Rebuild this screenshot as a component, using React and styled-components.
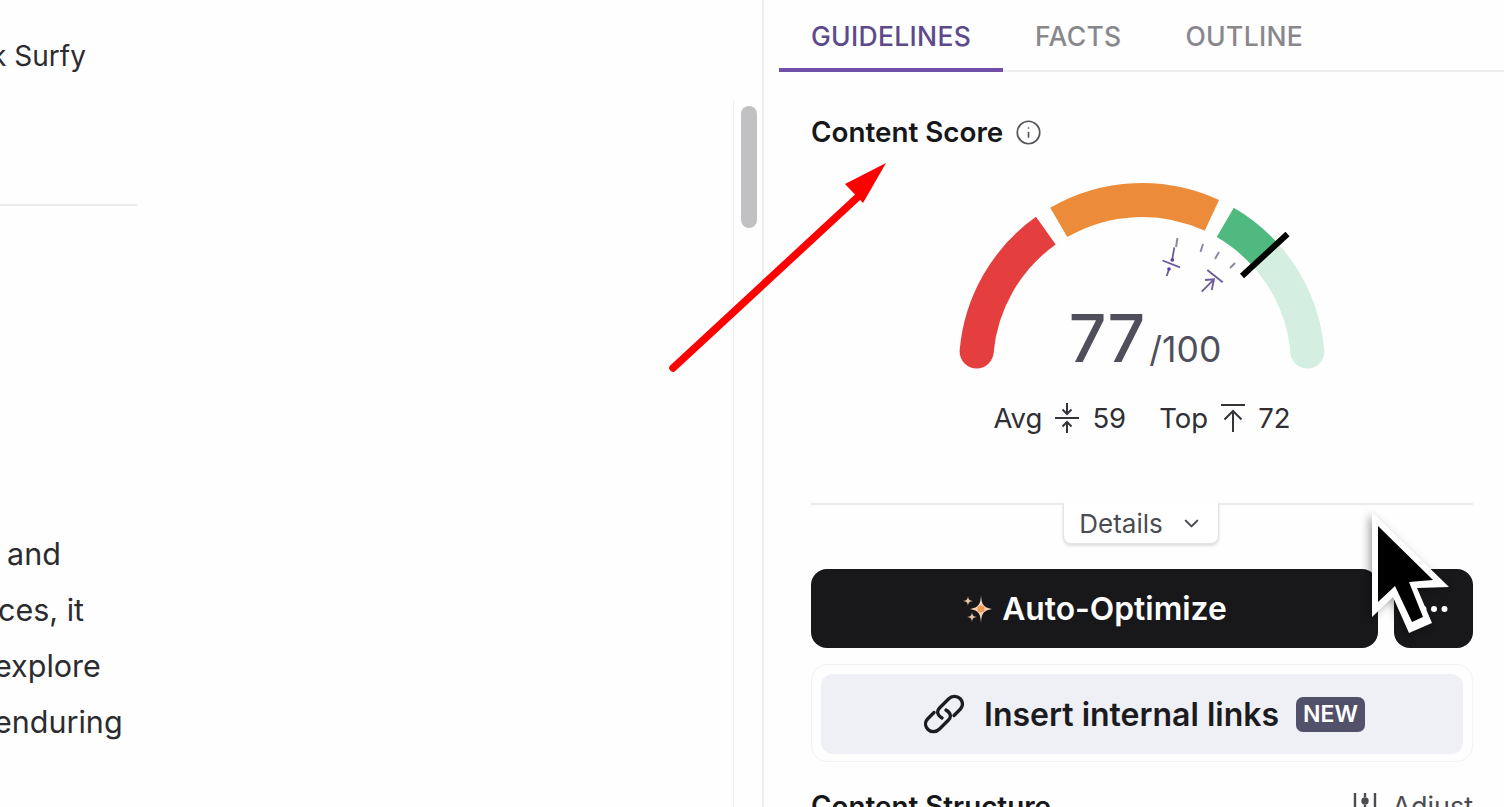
import React from "react";
import styled, { createGlobalStyle } from "styled-components";
import { ChevronDown, Ellipsis, Info } from "lucide-react";

const Global = createGlobalStyle`
  html, body {
    margin: 0;
    height: 100%;
    overflow: hidden;
    background: #fefefe;
    font-family: Inter, "Liberation Sans", sans-serif;
  }
  * { box-sizing: border-box; }
`;

const Page = styled.div`
  display: grid;
  grid-template-columns: 733px 31px 1fr;
  width: 1504px;
  height: 807px;
  overflow: hidden;
  position: relative;
`;

const Article = styled.div`
  overflow: hidden;
  padding-top: 36px;
  color: #2c2c30;
  font-size: 28px;
  line-height: 40px;
`;

const Line = styled.div`
  white-space: nowrap;
  margin-left: ${(p) => p.$left || 0}px;
`;

const Rule = styled.div`
  width: 137px;
  height: 2px;
  background: #ececee;
  margin: 128px 0 320px;
`;

const Para = styled.div`
  font-size: 30.5px;
  line-height: 56px;
`;

const Gutter = styled.div`
  padding-top: 100px;
  border-right: 2px solid #eeeef0;
  display: flex;
`;

const Track = styled.div`
  flex: 1;
  border-left: 1px solid #f0f0f2;
  padding: 6px 5px 0 7px;
`;

const Thumb = styled.div`
  height: 122px;
  background: #c1c1c3;
  border-radius: 8px;
`;

const Panel = styled.div`
  display: flex;
  flex-direction: column;
  padding-left: 15px;
  min-width: 0;
`;

const Tabs = styled.div`
  display: flex;
  height: 72px;
  border-bottom: 2px solid #eeeef1;
`;

const Tab = styled.div`
  padding: 0 32px;
  height: 72px;
  line-height: 72px;
  font-size: 26.5px;
  letter-spacing: 0.3px;
  font-weight: 500;
  color: ${(p) => (p.$active ? "#5c4a8c" : "#87878c")};
  border-bottom: ${(p) => (p.$active ? "4px solid #6f4fa8" : "none")};
`;

const Body = styled.div`
  padding: 0 31px 0 32px;
`;

const HeadRow = styled.div`
  display: flex;
  align-items: center;
  gap: 12px;
  margin-top: 42px;
  height: 36px;
`;

const Heading = styled.div`
  font-size: 27.8px;
  font-weight: 600;
  color: #17171a;
  white-space: nowrap;
`;

const GaugeWrap = styled.div`
  position: relative;
  height: 247px;
  margin-top: 26px;
`;

const GaugeSvg = styled.svg`
  display: block;
  width: 662px;
  height: 247px;
`;

const ScoreText = styled.div`
  position: absolute;
  left: 0;
  right: 0;
  top: 122px;
  display: flex;
  justify-content: center;
  align-items: baseline;
  gap: 4px;
  padding-left: 6px;
  color: #4f4f5c;
`;

const ScoreBig = styled.span`
  font-size: 66px;
  font-weight: 500;
  line-height: 80px;
`;

const ScoreOf = styled.span`
  font-size: 35.5px;
`;

const Stats = styled.div`
  position: absolute;
  left: 0;
  right: 0;
  top: 224px;
  display: flex;
  justify-content: center;
  align-items: center;
  gap: 33px;
  color: #2f2f35;
  font-size: 27.5px;
  line-height: 36px;
`;

const Stat = styled.div`
  display: flex;
  align-items: center;
  gap: 13px;
`;

const DividerRow = styled.div`
  margin-top: 80px;
  height: 2px;
  background: #ebebee;
  display: flex;
  justify-content: center;
`;

const DetailsBtn = styled.div`
  display: flex;
  align-items: center;
  justify-content: center;
  gap: 17px;
  width: 156px;
  height: 41px;
  background: #fff;
  margin-left: -2px;
  border: 1px solid #e3e3e7;
  border-top: none;
  border-radius: 0 0 8px 8px;
  box-shadow: 0 2px 3px rgba(30, 30, 50, 0.14);
  font-size: 26px;
  color: #4b4b52;
`;

const Actions = styled.div`
  display: flex;
  gap: 16px;
  margin-top: 64px;
`;

const DarkBtn = styled.div`
  display: flex;
  align-items: center;
  justify-content: center;
  gap: 10px;
  height: 79px;
  flex: ${(p) => (p.$small ? "0 0 79px" : "1")};
  background: #18181b;
  border-radius: 16px;
  color: #fff;
  font-size: 31.8px;
  font-weight: 600;
`;

const InsertCard = styled.div`
  margin-top: 16px;
  height: 98px;
  padding: 9px;
  border: 1px solid #f3f3f6;
  border-radius: 16px;
`;

const InsertBtn = styled.div`
  display: flex;
  align-items: center;
  justify-content: center;
  gap: 20px;
  height: 80px;
  padding-left: 5px;
  background: #eef0f6;
  border-radius: 12px;
  color: #1b1b20;
  font-size: 32px;
  font-weight: 600;
`;

const NewBadge = styled.span`
  background: #52516a;
  color: #fff;
  font-size: 23px;
  font-weight: 600;
  line-height: 35px;
  padding: 0 7px;
  border-radius: 7px;
  margin-left: -3px;
`;

const StructRow = styled.div`
  display: flex;
  justify-content: space-between;
  align-items: center;
  margin-top: 26px;
  height: 36px;
`;

const Adjust = styled.div`
  display: flex;
  align-items: center;
  gap: 14px;
  color: #4b4b52;
  font-size: 27px;
`;

const Overlay = styled.svg`
  position: absolute;
  left: 0;
  top: 0;
  width: 1504px;
  height: 807px;
  pointer-events: none;
`;

// gauge centre in the svg's own coordinates (svg starts at 811,176)
const CX = 331;
const CY = 190;
const R = 166;

function pt(deg) {
  const a = (deg * Math.PI) / 180;
  return [CX - R * Math.cos(a), CY - R * Math.sin(a)];
}

function arc(from, to) {
  const [x1, y1] = pt(from);
  const [x2, y2] = pt(to);
  return `M${x1} ${y1}A${R} ${R} 0 0 1 ${x2} ${y2}`;
}

function Gauge() {
  const [rx, ry] = pt(5);
  const [px, py] = pt(175);
  return (
    <GaugeSvg viewBox="0 0 662 247">
      <circle cx={px} cy={py} r="17" fill="#d4eee1" />
      <path d={arc(138, 175)} fill="none" stroke="#d4eee1" strokeWidth="34" />
      <circle cx={rx} cy={ry} r="17" fill="#e53e3e" />
      <path d={arc(5, 54.6)} fill="none" stroke="#e53e3e" strokeWidth="34" />
      <path d={arc(59.9, 114.9)} fill="none" stroke="#ec8c3a" strokeWidth="34" />
      <path d={arc(120.1, 138)} fill="none" stroke="#4fb97f" strokeWidth="34" />
      <path d="M431 100L476.500 58" stroke="#000" strokeWidth="6" />
      <g stroke="#8f8aa0" strokeWidth="2" fill="none">
        <path d="M366.500 62L365 71M392 68L389.500 76M408 76L404 83M424 87L419 92" />
      </g>
      <g stroke="#6d5a9c" strokeWidth="1.8" fill="none">
        <path d="M351.500 84.500L369 91.300" />
        <path d="M363.300 71.300L361.300 83.300M358 93.300L355.700 100" />
        <path d="M396.300 94L411.700 106.300" />
        <path d="M390.700 115.700L403 103.300M394 104L403 103.300L400.700 114" />
      </g>
      <circle cx="361.300" cy="84" r="1.8" fill="#5b3fa0" />
      <circle cx="358" cy="93" r="1.8" fill="#5b3fa0" />
    </GaugeSvg>
  );
}

function AvgIcon() {
  return (
    <svg width="24" height="32" viewBox="0 0 24 32" fill="none" stroke="#34343a" strokeWidth="2">
      <path d="M0 16H24M12 1V12M7.500 7.500L12 12L16.500 7.500M12 31V20M7.500 24.500L12 20L16.500 24.500" />
    </svg>
  );
}

function TopIcon() {
  return (
    <svg width="24" height="30" viewBox="0 0 24 30" fill="none" stroke="#34343a" strokeWidth="2">
      <path d="M0 2H24M12 29V8M3.500 16.500L12 8L20.500 16.500" />
    </svg>
  );
}

function Sparkles() {
  return (
    <svg width="30" height="32" viewBox="0 0 30 32">
      <path d="M19 2C19.500 11 21 14.500 30 16C21 17.500 19.500 21 19 30C18.500 21 17 17.500 8 16C17 14.500 18.500 11 19 2Z" fill="#f6d3b4" />
      <circle cx="19" cy="16" r="3.500" fill="#ee9a55" />
      <path d="M6 3C6.400 6.500 7.500 7.600 11 8C7.500 8.400 6.400 9.500 6 13C5.600 9.500 4.500 8.400 1 8C4.500 7.600 5.600 6.500 6 3Z" fill="#eec3a0" />
      <path d="M10 19C10.400 22.500 11.500 23.600 15 24C11.500 24.400 10.400 25.500 10 29C9.600 25.500 8.500 24.400 5 24C8.500 23.600 9.600 22.500 10 19Z" fill="#e5bfa3" />
    </svg>
  );
}

function ChainIcon() {
  return (
    <svg width="40" height="40" viewBox="0 0 40 40" fill="none" stroke="#1b1b20" strokeWidth="3.300" strokeLinecap="round">
      <path d="M18 24C13 21 12.500 17 15.500 14L24.500 5C28 1.500 33 1.500 36 4.500C39.500 8 39 12.500 36 15.500L30 21.500" />
      <path d="M22 16C27 19 27.500 23 24.500 26L15.500 35C12 38.500 7 38.500 4 35.500C.5 32 1 27.500 4 24.500L10 18.500" />
    </svg>
  );
}

function SliderIcon() {
  return (
    <svg width="26" height="26" viewBox="0 0 26 26" fill="none" stroke="#4b4b52" strokeWidth="2.400">
      <path d="M3 0V14M13 0V4M13 12V26M23 0V16" />
      <circle cx="13" cy="8" r="2.500" fill="#4b4b52" />
    </svg>
  );
}

export default function App() {
  return (
    <>
      <Global />
      <Page>
        <Article>
          <Line $left={-43}>Ask Surfy</Line>
          <Rule />
          <Para>
            <Line $left={7}>and</Line>
            <Line $left={-2}>ces, it</Line>
            <Line $left={-6}>explore</Line>
            <Line $left={-6}>enduring</Line>
          </Para>
        </Article>
        <Gutter>
          <Track>
            <Thumb />
          </Track>
        </Gutter>
        <Panel>
          <Tabs>
            <Tab $active>GUIDELINES</Tab>
            <Tab>FACTS</Tab>
            <Tab>OUTLINE</Tab>
          </Tabs>
          <Body>
            <HeadRow>
              <Heading>Content Score</Heading>
              <Info size={27} strokeWidth={1.5} color="#55555c" />
            </HeadRow>
            <GaugeWrap>
              <Gauge />
              <ScoreText>
                <ScoreBig>77</ScoreBig>
                <ScoreOf>/100</ScoreOf>
              </ScoreText>
              <Stats>
                <Stat>
                  Avg <AvgIcon /> 59
                </Stat>
                <Stat>
                  Top <TopIcon /> 72
                </Stat>
              </Stats>
            </GaugeWrap>
            <DividerRow>
              <DetailsBtn>
                Details
                <ChevronDown size={23} strokeWidth={2.2} color="#4b4b52" />
              </DetailsBtn>
            </DividerRow>
            <Actions>
              <DarkBtn>
                <Sparkles />
                Auto-Optimize
              </DarkBtn>
              <DarkBtn $small>
                <Ellipsis size={36} color="#fff" />
              </DarkBtn>
            </Actions>
            <InsertCard>
              <InsertBtn>
                <ChainIcon />
                Insert internal links
                <NewBadge>NEW</NewBadge>
              </InsertBtn>
            </InsertCard>
            <StructRow>
              <Heading>Content Structure</Heading>
              <Adjust>
                <SliderIcon />
                Adjust
              </Adjust>
            </StructRow>
          </Body>
        </Panel>
        <Overlay viewBox="0 0 1504 807">
          <path d="M673 368L860 195" stroke="#f00" strokeWidth="7.500" strokeLinecap="round" />
          <path d="M886 163L845 184L863 203Z" fill="#f00" />
          <path
            d="M1372 512L1449 587L1417 588L1432 623L1409 633L1393 597L1372 617Z"
            fill="#fff"
            style={{ filter: "drop-shadow(-3px 2px 4px rgba(0,0,0,.35))" }}
          />
          <path d="M1378 526L1433 580L1409 582L1423 617L1412 622L1395 586L1378 602Z" fill="#000" />
        </Overlay>
      </Page>
    </>
  );
}
